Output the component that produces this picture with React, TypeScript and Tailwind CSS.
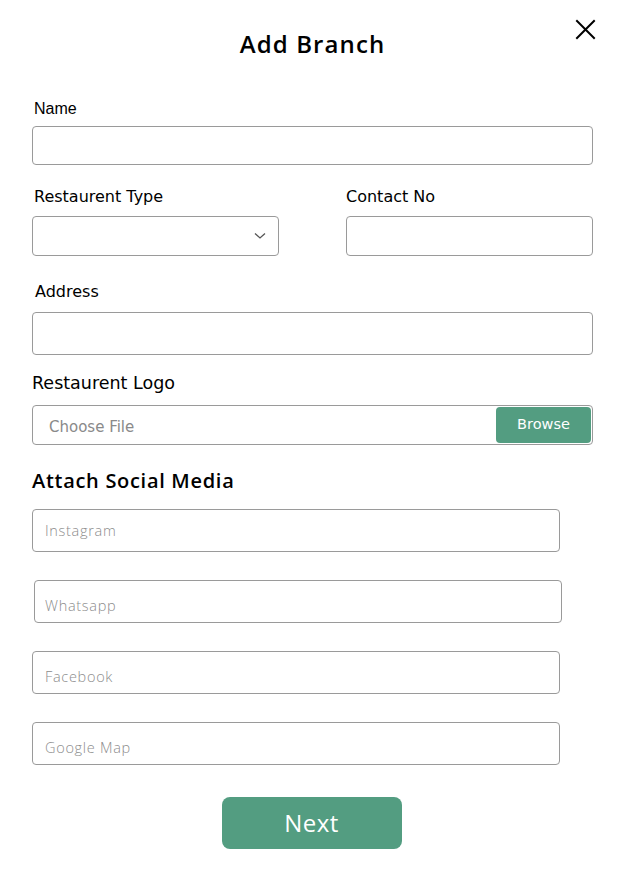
import React from 'react';

const font = { fontFamily: '"DejaVu Sans", "Open Sans", sans-serif' };

const SocialInput: React.FC<{ placeholder: string; className?: string; nudge?: boolean }> = ({ placeholder, className = 'px-[12px]', nudge }) => (
  <input
    placeholder={placeholder}
    className={`block w-[528px] h-[43px] rounded-[4px] border border-[#9a9a9a] text-[14.5px] font-light text-[#333] placeholder:text-[#8c8c8c] outline-none ${nudge ? 'pt-[7px]' : ''} ${className}`}
    style={{ fontFamily: '"Open Sans", sans-serif', letterSpacing: '0.7px' }}
  />
);

const App: React.FC = () => {
  return (
    <div className="relative w-[625px] h-[870px] bg-white px-8 pt-[28px] text-black" style={font}>
      {/* close */}
      <button className="absolute left-[573px] top-[17px] w-[24px] h-[24px] flex items-center justify-center">
        <svg width="22" height="22" viewBox="0 0 22 22" fill="none" stroke="#000" strokeWidth="2" strokeLinecap="square">
          <path d="M3 3L20 20M20 3L3 20" />
        </svg>
      </button>

      <h1 className="text-center text-[24px] leading-[32px]" style={{ fontFamily: '"Open Sans", sans-serif', fontWeight: 600, letterSpacing: '1.1px' }}>Add Branch</h1>

      <label className="block mt-[39px] ml-[2px] text-[16px] leading-[20px]" style={{ fontFamily: '"Liberation Sans", Arial, sans-serif' }}>Name</label>
      <input className="block mt-[7px] w-full h-[39px] rounded-[4px] border border-[#9a9a9a] outline-none px-3" />

      <div className="mt-[22px] grid grid-cols-[247px_247px] justify-between">
        <div>
          <label className="block ml-[2px] text-[16px] leading-[20px]">Restaurent Type</label>
          <div className="mt-[9px] h-[40px] rounded-[4px] border border-[#9a9a9a] flex items-center justify-end pr-[12px]">
            <svg width="12" height="8" viewBox="0 0 12 8" fill="none" stroke="#555" strokeWidth="1.3">
              <path d="M1 1.5L6 6L11 1.5" />
            </svg>
          </div>
        </div>
        <div>
          <label className="block text-[16px] leading-[20px]">Contact No</label>
          <input className="block mt-[9px] w-full h-[40px] rounded-[4px] border border-[#9a9a9a] outline-none px-3" />
        </div>
      </div>

      <label className="block mt-[26px] ml-[3px] text-[16px] leading-[20px]">Address</label>
      <input className="block mt-[10px] w-full h-[43px] rounded-[4px] border border-[#9a9a9a] outline-none px-3" />

      <label className="block mt-[17px] text-[17.5px] leading-[22px]">Restaurent Logo</label>
      <div className="mt-[11px] h-[40px] rounded-[4px] border border-[#9a9a9a] flex items-stretch justify-between pl-[16px] p-[1px]">
        <span className="self-center pt-[5px] text-[15px] text-[#8a8a8a]">Choose File</span>
        <button className="w-[95px] rounded-[4px] bg-[#539d81] text-white text-[14.5px] pb-[1px]">Browse</button>
      </div>

      <h2 className="mt-[22px] text-[20px] leading-[28px]" style={{ fontFamily: '"Open Sans", sans-serif', fontWeight: 600, letterSpacing: '0.7px' }}>Attach Social Media</h2>

      <div className="mt-[14px] flex flex-col gap-[28px]">
        <SocialInput placeholder="Instagram" />
        <SocialInput placeholder="Whatsapp" className="ml-[2px] px-[10px]" nudge />
        <SocialInput placeholder="Facebook" nudge />
        <SocialInput placeholder="Google Map" nudge />
      </div>

      <div className="mt-[32px] flex justify-center">
        <button className="w-[180px] h-[52px] rounded-[8px] bg-[#539d81] text-white text-[24px] ml-[-2px]" style={{ fontFamily: '"Open Sans", sans-serif', fontWeight: 500, letterSpacing: '0.5px' }}>Next</button>
      </div>
    </div>
  );
};

export default App;
